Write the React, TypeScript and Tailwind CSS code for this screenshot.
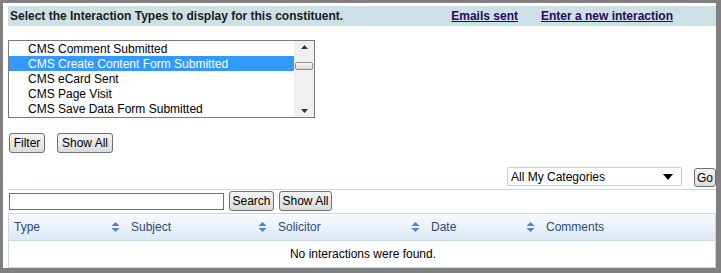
import React from "react";

const font = { fontFamily: '"Liberation Sans", Arial, sans-serif' };

function SortIcon() {
  return (
    <svg width="9" height="12" viewBox="0 0 9 12" className="shrink-0">
      <polygon points="4.5,1 8.5,5 0.5,5" fill="#4a86c8" />
      <polygon points="0.5,7 8.5,7 4.5,11" fill="#4a86c8" />
    </svg>
  );
}

function Btn({ children, className = "" }: { children: React.ReactNode; className?: string }) {
  return (
    <button
      className={`flex items-center justify-center border border-[#707070] rounded-[3px] bg-gradient-to-b from-[#f4f4f4] to-[#dcdcdc] text-[12px] text-black leading-none ${className}`}
    >
      {children}
    </button>
  );
}

export default function App() {
  const items = [
    "CMS Comment Submitted",
    "CMS Create Content Form Submitted",
    "CMS eCard Sent",
    "CMS Page Visit",
    "CMS Save Data Form Submitted",
  ];

  const cols = [
    { label: "Type", w: "w-[117px]" },
    { label: "Subject", w: "w-[147px]" },
    { label: "Solicitor", w: "w-[153px]" },
    { label: "Date", w: "w-[115px]" },
  ];

  return (
    <div style={font} className="w-[721px] h-[273px] bg-[#808080] pt-[3px] pl-[3px] pr-[5px] pb-[5px]">
      <div className="w-full h-full bg-white flex flex-col">
        {/* Header */}
        <div className="mt-[3px] ml-[5px] h-[20px] bg-[#cce0e5] flex items-center pl-[2px] pr-[43px]">
          <span className="text-[12px] font-bold text-[#1a1a1a]">
            Select the Interaction Types to display for this constituent.
          </span>
          <div className="ml-auto flex gap-[23px]">
            <a className="text-[12px] font-bold underline text-[#2a0a5c]">Emails sent</a>
            <a className="text-[12px] font-bold underline text-[#2a0a5c]">Enter a new interaction</a>
          </div>
        </div>

        {/* Listbox */}
        <div className="mt-[14px] ml-[5px] w-[307px] h-[78px] border border-[#7a7a7a] flex overflow-hidden">
          <div className="flex-1 flex flex-col">
            {items.map((it, i) => (
              <div
                key={it}
                className={`h-[15px] flex items-center pl-[19px] text-[12px] leading-none ${
                  i === 1 ? "bg-[#3399ff] text-white" : "text-black"
                }`}
              >
                {it}
              </div>
            ))}
          </div>
          <div className="w-[20px] bg-[#f0f0f0] flex flex-col items-center justify-between py-[4px] relative">
            <svg width="7" height="4" viewBox="0 0 7 4">
              <polygon points="3.5,0 7,4 0,4" fill="#333" />
            </svg>
            <div className="absolute top-[21px] left-[1px] w-[18px] h-[8px] rounded-[2px] border border-[#8a8a8a] bg-gradient-to-b from-[#f8f8f8] to-[#d8d8d8]" />
            <svg width="7" height="4" viewBox="0 0 7 4">
              <polygon points="0,0 7,0 3.5,4" fill="#333" />
            </svg>
          </div>
        </div>

        {/* Filter buttons */}
        <div className="mt-[15px] ml-[6px] flex gap-[12px]">
          <Btn className="w-[36px] h-[20px]">Filter</Btn>
          <Btn className="w-[56px] h-[20px]">Show All</Btn>
        </div>

        {/* Category select */}
        <div className="mt-[14px] flex items-start">
          <div className="ml-[504px] w-[175px] h-[19px] border border-[#cccccc] rounded-[2px] flex items-center pl-[3px] pr-[8px] text-[12px] text-black">
            <span>All My Categories</span>
            <svg className="ml-auto" width="10" height="6" viewBox="0 0 10 6">
              <polygon points="0,0 10,0 5,6" fill="#000" />
            </svg>
          </div>
          <Btn className="ml-[12px] mt-[1px] w-[22px] h-[19px]">Go</Btn>
        </div>

        {/* divider */}
        <div className="ml-[5px] mt-[2px] h-px bg-[#c5d9e8]" />

        {/* Search row */}
        <div className="mt-[1px] ml-[6px] flex items-center">
          <div className="w-[215px] h-[17px] border border-[#707070] bg-white" />
          <Btn className="ml-[5px] w-[45px] h-[20px]">Search</Btn>
          <Btn className="ml-[5px] w-[53px] h-[20px]">Show All</Btn>
        </div>

        {/* Table */}
        <div className="mt-[2px] ml-[5px] border border-[#c8d8e6] flex flex-col">
          <div className="h-[27px] bg-gradient-to-b from-[#f7fafd] to-[#dde9f4] border-b border-[#c8d8e6] flex items-center text-[12px] text-[#2f4a74]">
            {cols.map((c) => (
              <div key={c.label} className={`${c.w} flex items-center pl-[5px] pr-[6px]`}>
                <span>{c.label}</span>
                <span className="ml-auto">
                  <SortIcon />
                </span>
              </div>
            ))}
            <div className="pl-[5px]">Comments</div>
          </div>
          <div className="h-[26px] flex items-center justify-center text-[12px] text-black pl-[2px]">
            No interactions were found.
          </div>
        </div>
      </div>
    </div>
  );
}
